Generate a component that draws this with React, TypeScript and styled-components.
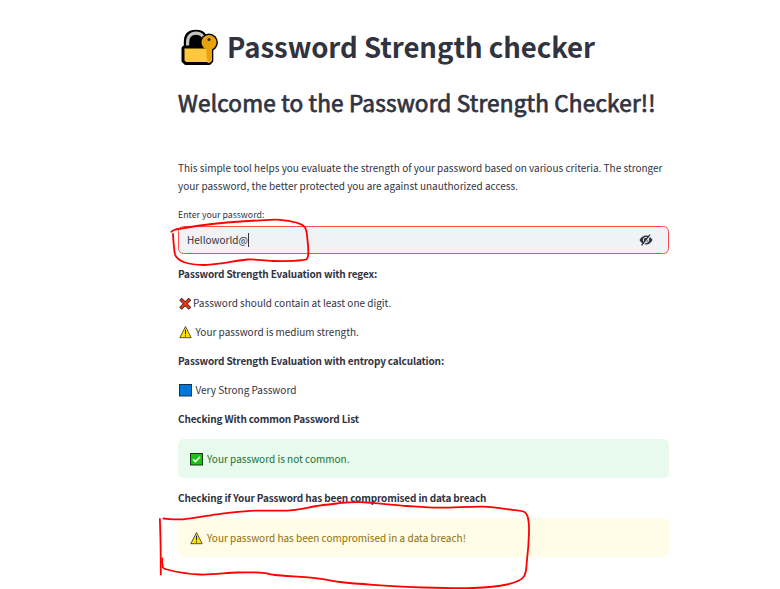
import React from 'react';
import styled, { createGlobalStyle } from 'styled-components';

const GlobalStyle = createGlobalStyle`
  * { box-sizing: border-box; }
  body {
    margin: 0;
    background: #ffffff;
    color: #31333f;
    font-family: "Noto Sans CJK SC", "Noto Sans", sans-serif;
    overflow: hidden;
  }
`;

const Page = styled.div`
  position: relative;
  width: 780px;
  height: 589px;
  overflow: hidden;
`;

const Main = styled.main`
  display: flex;
  flex-direction: column;
  width: 491px;
  margin-left: 178px;
  padding-top: 28px;
`;

const Title = styled.h1`
  display: flex;
  align-items: center;
  gap: 9px;
  margin: 0;
  height: 37px;
  font-size: 27.55px;
  font-weight: 700;
  letter-spacing: -0.04px;
  line-height: 37px;
  white-space: nowrap;
`;

const Heading = styled.h2`
  margin: 21px 0 0;
  height: 32px;
  font-size: 22.56px;
  font-weight: 400;
  letter-spacing: 0.175px;
  -webkit-text-stroke: 0.75px #31333f;
  line-height: 32px;
  white-space: nowrap;
`;

const Intro = styled.p`
  margin: 41px 0 0;
  font-size: 10.01px;
  line-height: 18px;
  white-space: nowrap;
`;

const Label = styled.label`
  margin-top: 12px;
  height: 19px;
  font-size: 8.77px;
  line-height: 15px;
`;

const Field = styled.div`
  display: flex;
  align-items: center;
  justify-content: space-between;
  height: 28px;
  padding: 0 15px 0 8px;
  border: 1px solid #ff4b4b;
  border-radius: 5.6px;
  background: #f0f2f6;
  font-size: 10.03px;
  line-height: 18px;
`;

const Value = styled.span`
  display: flex;
  align-items: center;
`;

const Caret = styled.span`
  width: 1px;
  height: 14px;
  background: #31333f;
`;

const Results = styled.section`
  display: flex;
  flex-direction: column;
  gap: 11px;
  padding-top: 11px;
`;

const Line = styled.p<{ $strong?: boolean; $gap?: number }>`
  display: flex;
  align-items: center;
  gap: ${({ $gap = 3 }) => $gap}px;
  margin: 0;
  height: 18px;
  font-size: 10.01px;
  font-weight: ${({ $strong }) => ($strong ? 700 : 400)};
  letter-spacing: ${({ $strong }) => ($strong ? '-0.147px' : 'normal')};
  line-height: 18px;
  white-space: nowrap;
`;

const Alert = styled.div<{ $tone: 'success' | 'warning' }>`
  display: flex;
  align-items: center;
  height: 39px;
  padding: 0 11px;
  border-radius: 5.6px;
  background: ${({ $tone }) => ($tone === 'success' ? '#e8f9ee' : '#fffce7')};
  color: ${({ $tone }) => ($tone === 'success' ? '#177233' : '#926c05')};
`;

const Ink = styled.svg`
  position: absolute;
  inset: 0;
  pointer-events: none;
`;

const LockIcon = () => (
  <svg width="40" height="38" viewBox="0 0 40 38">
    <path d="M8.500 20V14C8.500 7.500 12 4.500 18 4.500S27 7.500 27 14V20" fill="#000" stroke="#000" strokeWidth="5.400" />
    <path d="M9.600 20V14.500C9.600 8.500 13 5.200 18 5.200S26.500 8.500 26.500 14.500V20" fill="none" stroke="#c3c3c3" strokeWidth="3.200" />
    <circle cx="31" cy="14.500" r="8.900" fill="#000" />
    <path d="M6 19H33.800V33L31.500 35.500H7.500L5 33V20Z" fill="#ffc83d" stroke="#000" strokeWidth="3" strokeLinejoin="round" />
    <path d="M29.500 19H34V33L31.500 35H29.500Z" fill="#e8a62c" />
    <path d="M28.500 18H33.800V30L31 33L28.500 30Z" fill="#e8a20c" />
    <circle cx="31" cy="14.500" r="7.500" fill="#e8a20c" />
    <circle cx="31" cy="11.500" r="1.600" fill="#382a10" />
  </svg>
);

const CrossIcon = () => (
  <svg width="13" height="13" viewBox="0 0 13 13">
    <path d="M2.500 2L12 11.500M12 2L2.500 11.500" stroke="#321b1b" strokeWidth="3.600" />
    <path d="M2.900 2.400L11.600 11.100M11.600 2.400L2.900 11.100" stroke="#f03a17" strokeWidth="2.100" />
  </svg>
);

const WarningIcon = () => (
  <svg width="14" height="14" viewBox="0 0 14 14">
    <path d="M7.500 1.500L13.200 12.700H1.800Z" fill="#ffe000" stroke="#454535" strokeWidth="0.900" strokeLinejoin="round" />
    <path d="M7.500 4.700V9.300M7.500 10.300V11.600" stroke="#222" strokeWidth="1" />
  </svg>
);

const SquareIcon = () => (
  <svg width="14" height="14" viewBox="0 0 14 14">
    <rect x="1.500" y="1.500" width="12" height="11.500" fill="#0078d7" stroke="#17344f" />
  </svg>
);

const CheckIcon = () => (
  <svg width="14" height="14" viewBox="0 0 14 14">
    <rect x="1.500" y="1.500" width="12" height="11.500" fill="#16c60c" stroke="#183a18" />
    <path d="M4 7.200L6.400 9.600L11.100 4.800" fill="none" stroke="#fff" strokeWidth="1.500" />
  </svg>
);

const HiddenIcon = () => (
  <svg width="14" height="12" viewBox="0 0 14 12">
    <path d="M0.500 6Q3 1.500 7 1.500T13.500 6Q11 10.500 7 10.500T0.500 6Z" fill="#31333f" />
    <circle cx="7" cy="6" r="2.700" fill="none" stroke="#f0f2f6" strokeWidth="0.900" />
    <path d="M3.400 11.800L12 1.200" stroke="#f0f2f6" strokeWidth="1.300" />
    <path d="M2.500 11.300L11 0.700" stroke="#31333f" strokeWidth="1.300" />
  </svg>
);

type Point = [number, number];

// Catmull-Rom interpolation through the pen samples.
const stroke = (pts: Point[]) =>
  pts.slice(1).reduce((d, p, i) => {
    const a = pts[i];
    const before = pts[i - 1] ?? a;
    const after = pts[i + 2] ?? p;
    const c1 = [a[0] + (p[0] - before[0]) / 6, a[1] + (p[1] - before[1]) / 6];
    const c2 = [p[0] - (after[0] - a[0]) / 6, p[1] - (after[1] - a[1]) / 6];
    return `${d}C${c1} ${c2} ${p}`;
  }, `M${pts[0]}`);

const penStrokes: Point[][] = [
  [[171.5, 231.7], [174, 230], [181, 228.5], [200, 225.5], [227, 222.5], [260, 220.3], [280, 219.8], [296, 222.5], [305, 227.5], [307.5, 240], [308, 256], [302, 260.2], [273, 261], [248, 259.5], [223, 263.2], [203, 265], [185, 262.5], [176, 256.5], [174, 247], [173, 234]],
  [[159.9, 519], [160.6, 545], [160.8, 574.5]],
  [[163.5, 518.5], [183, 519.3], [217, 514.3], [250, 510.8], [290, 510.3], [317, 506], [337, 503.5], [360, 502.2], [407, 506], [440, 507.7], [483, 506.7], [512, 509.8], [524, 511.8], [528, 518], [529, 532], [527, 560], [523.5, 577], [507, 584.5], [473, 588], [423, 587.5], [373, 584.8], [340, 582], [317, 578.3], [275, 575], [263, 572.8], [237, 572.5], [200, 574.5], [167, 569.5], [162.5, 564.5], [162.3, 558.3]],
];

export default function App() {
  return (
    <Page>
      <GlobalStyle />
      <Main>
        <Title><LockIcon />Password Strength checker</Title>
        <Heading>Welcome to the Password Strength Checker!!</Heading>
        <Intro>
          This simple tool helps you evaluate the strength of your password based on various criteria. The stronger
          <br />
          your password, the better protected you are against unauthorized access.
        </Intro>
        <Label>Enter your password:</Label>
        <Field>
          <Value>Helloworld@<Caret /></Value>
          <HiddenIcon />
        </Field>
        <Results>
          <Line $strong>Password Strength Evaluation with regex:</Line>
          <Line $gap={2}><CrossIcon />Password should contain at least one digit.</Line>
          <Line $gap={3.5}><WarningIcon />Your password is medium strength.</Line>
          <Line $strong>Password Strength Evaluation with entropy calculation:</Line>
          <Line $gap={3.5}><SquareIcon />Very Strong Password</Line>
          <Line $strong>Checking With common Password List</Line>
          <Alert $tone="success"><Line $gap={4}><CheckIcon />Your password is not common.</Line></Alert>
          <Line $strong>Checking if Your Password has been compromised in data breach</Line>
          <Alert $tone="warning"><Line $gap={4}><WarningIcon />Your password has been compromised in a data breach!</Line></Alert>
        </Results>
      </Main>
      <Ink width="780" height="589" viewBox="0 0 780 589" fill="none" stroke="#ff0000" strokeWidth="1.8" strokeLinecap="round" strokeLinejoin="round">
        {penStrokes.map((pts, i) => <path key={i} d={stroke(pts)} />)}
      </Ink>
    </Page>
  );
}
